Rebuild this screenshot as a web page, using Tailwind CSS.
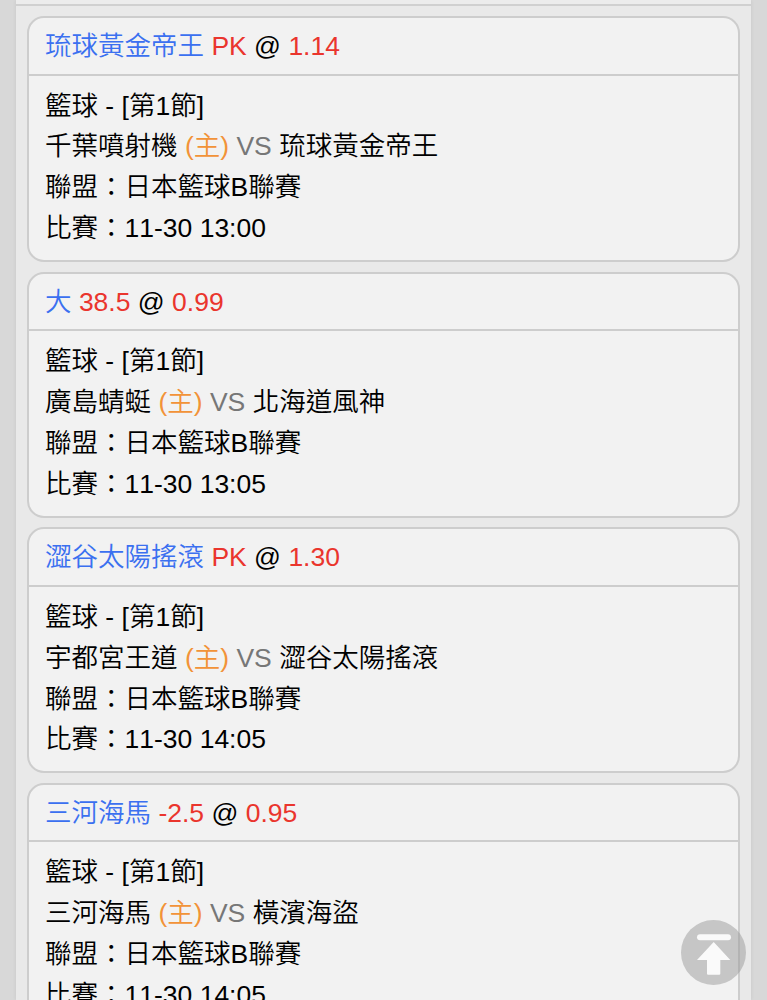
<!DOCTYPE html>
<html lang="zh-Hant">
<head>
  <meta charset="UTF-8">
  <meta name="viewport" content="width=device-width, initial-scale=1.0">
  <title>注單</title>
  <script src="https://cdn.jsdelivr.net/npm/@tailwindcss/browser@4"></script>
</head>
<body class="bg-[#d8d8d8] h-screen overflow-hidden font-['Liberation_Sans','Noto_Sans_CJK_TC',sans-serif] font-[350] [font-kerning:none] text-[26.5px] leading-[40.9px] text-black">

  <!-- Panel -->
  <main class="mx-4 h-full overflow-hidden bg-[#e9e9e9] shadow-[0_0_4px_rgba(0,0,0,0.08)]">
    <div class="h-[6px] border-b-2 border-[#d0d0d0] bg-[#ececec]"></div>

    <!-- Bet List -->
    <div class="flex flex-col gap-[9.6px] px-[11px] pt-[10px]">
      <section class="h-[246px] shrink-0 rounded-[17px] border-2 border-[#cdcdcd] bg-[#f2f2f2]">
        <h2 class="h-[57.500px] border-b-2 border-[#cdcdcd] px-4 pt-2"><span class="text-[#3b70f0]">琉球黃金帝王</span> <span class="text-[#ea352d]">PK</span> @ <span class="text-[#ea352d]">1.14</span></h2>
        <div class="px-4 pt-[10px]">
          <p>籃球 - [第1節]</p>
          <p>千葉噴射機 <span class="text-[#f29338]">(主)</span> <span class="text-[#777]">VS</span> 琉球黃金帝王</p>
          <p>聯盟：日本籃球B聯賽</p>
          <p>比賽：11-30 13:00</p>
        </div>
      </section>

      <section class="h-[246px] shrink-0 rounded-[17px] border-2 border-[#cdcdcd] bg-[#f2f2f2]">
        <h2 class="h-[57.500px] border-b-2 border-[#cdcdcd] px-4 pt-2"><span class="text-[#3b70f0]">大</span> <span class="text-[#ea352d]">38.5</span> @ <span class="text-[#ea352d]">0.99</span></h2>
        <div class="px-4 pt-[10px]">
          <p>籃球 - [第1節]</p>
          <p>廣島蜻蜓 <span class="text-[#f29338]">(主)</span> <span class="text-[#777]">VS</span> 北海道風神</p>
          <p>聯盟：日本籃球B聯賽</p>
          <p>比賽：11-30 13:05</p>
        </div>
      </section>

      <section class="h-[246px] shrink-0 rounded-[17px] border-2 border-[#cdcdcd] bg-[#f2f2f2]">
        <h2 class="h-[57.500px] border-b-2 border-[#cdcdcd] px-4 pt-2"><span class="text-[#3b70f0]">澀谷太陽搖滾</span> <span class="text-[#ea352d]">PK</span> @ <span class="text-[#ea352d]">1.30</span></h2>
        <div class="px-4 pt-[10px]">
          <p>籃球 - [第1節]</p>
          <p>宇都宮王道 <span class="text-[#f29338]">(主)</span> <span class="text-[#777]">VS</span> 澀谷太陽搖滾</p>
          <p>聯盟：日本籃球B聯賽</p>
          <p>比賽：11-30 14:05</p>
        </div>
      </section>

      <section class="h-[246px] shrink-0 rounded-[17px] border-2 border-[#cdcdcd] bg-[#f2f2f2]">
        <h2 class="h-[57.500px] border-b-2 border-[#cdcdcd] px-4 pt-2"><span class="text-[#3b70f0]">三河海馬</span> <span class="text-[#ea352d]">-2.5</span> @ <span class="text-[#ea352d]">0.95</span></h2>
        <div class="px-4 pt-[10px]">
          <p>籃球 - [第1節]</p>
          <p>三河海馬 <span class="text-[#f29338]">(主)</span> <span class="text-[#777]">VS</span> 橫濱海盜</p>
          <p>聯盟：日本籃球B聯賽</p>
          <p>比賽：11-30 14:05</p>
        </div>
      </section>
    </div>
  </main>

  <!-- Back to top -->
  <button class="fixed right-[21px] bottom-[15px] size-[65px] rounded-full bg-[#999]/50" aria-label="回到頂部">
    <svg class="size-full" viewBox="0 0 65 65" fill="#fafafa">
      <rect x="16" y="14.3" width="34" height="6" rx="3" />
      <path d="M32.700 22 L49.300 40 H39.300 V53.700 Q39.300 54.700 38.300 54.700 H27 Q26 54.700 26 53.700 V40 H16 Z" />
    </svg>
  </button>

</body>
</html>
